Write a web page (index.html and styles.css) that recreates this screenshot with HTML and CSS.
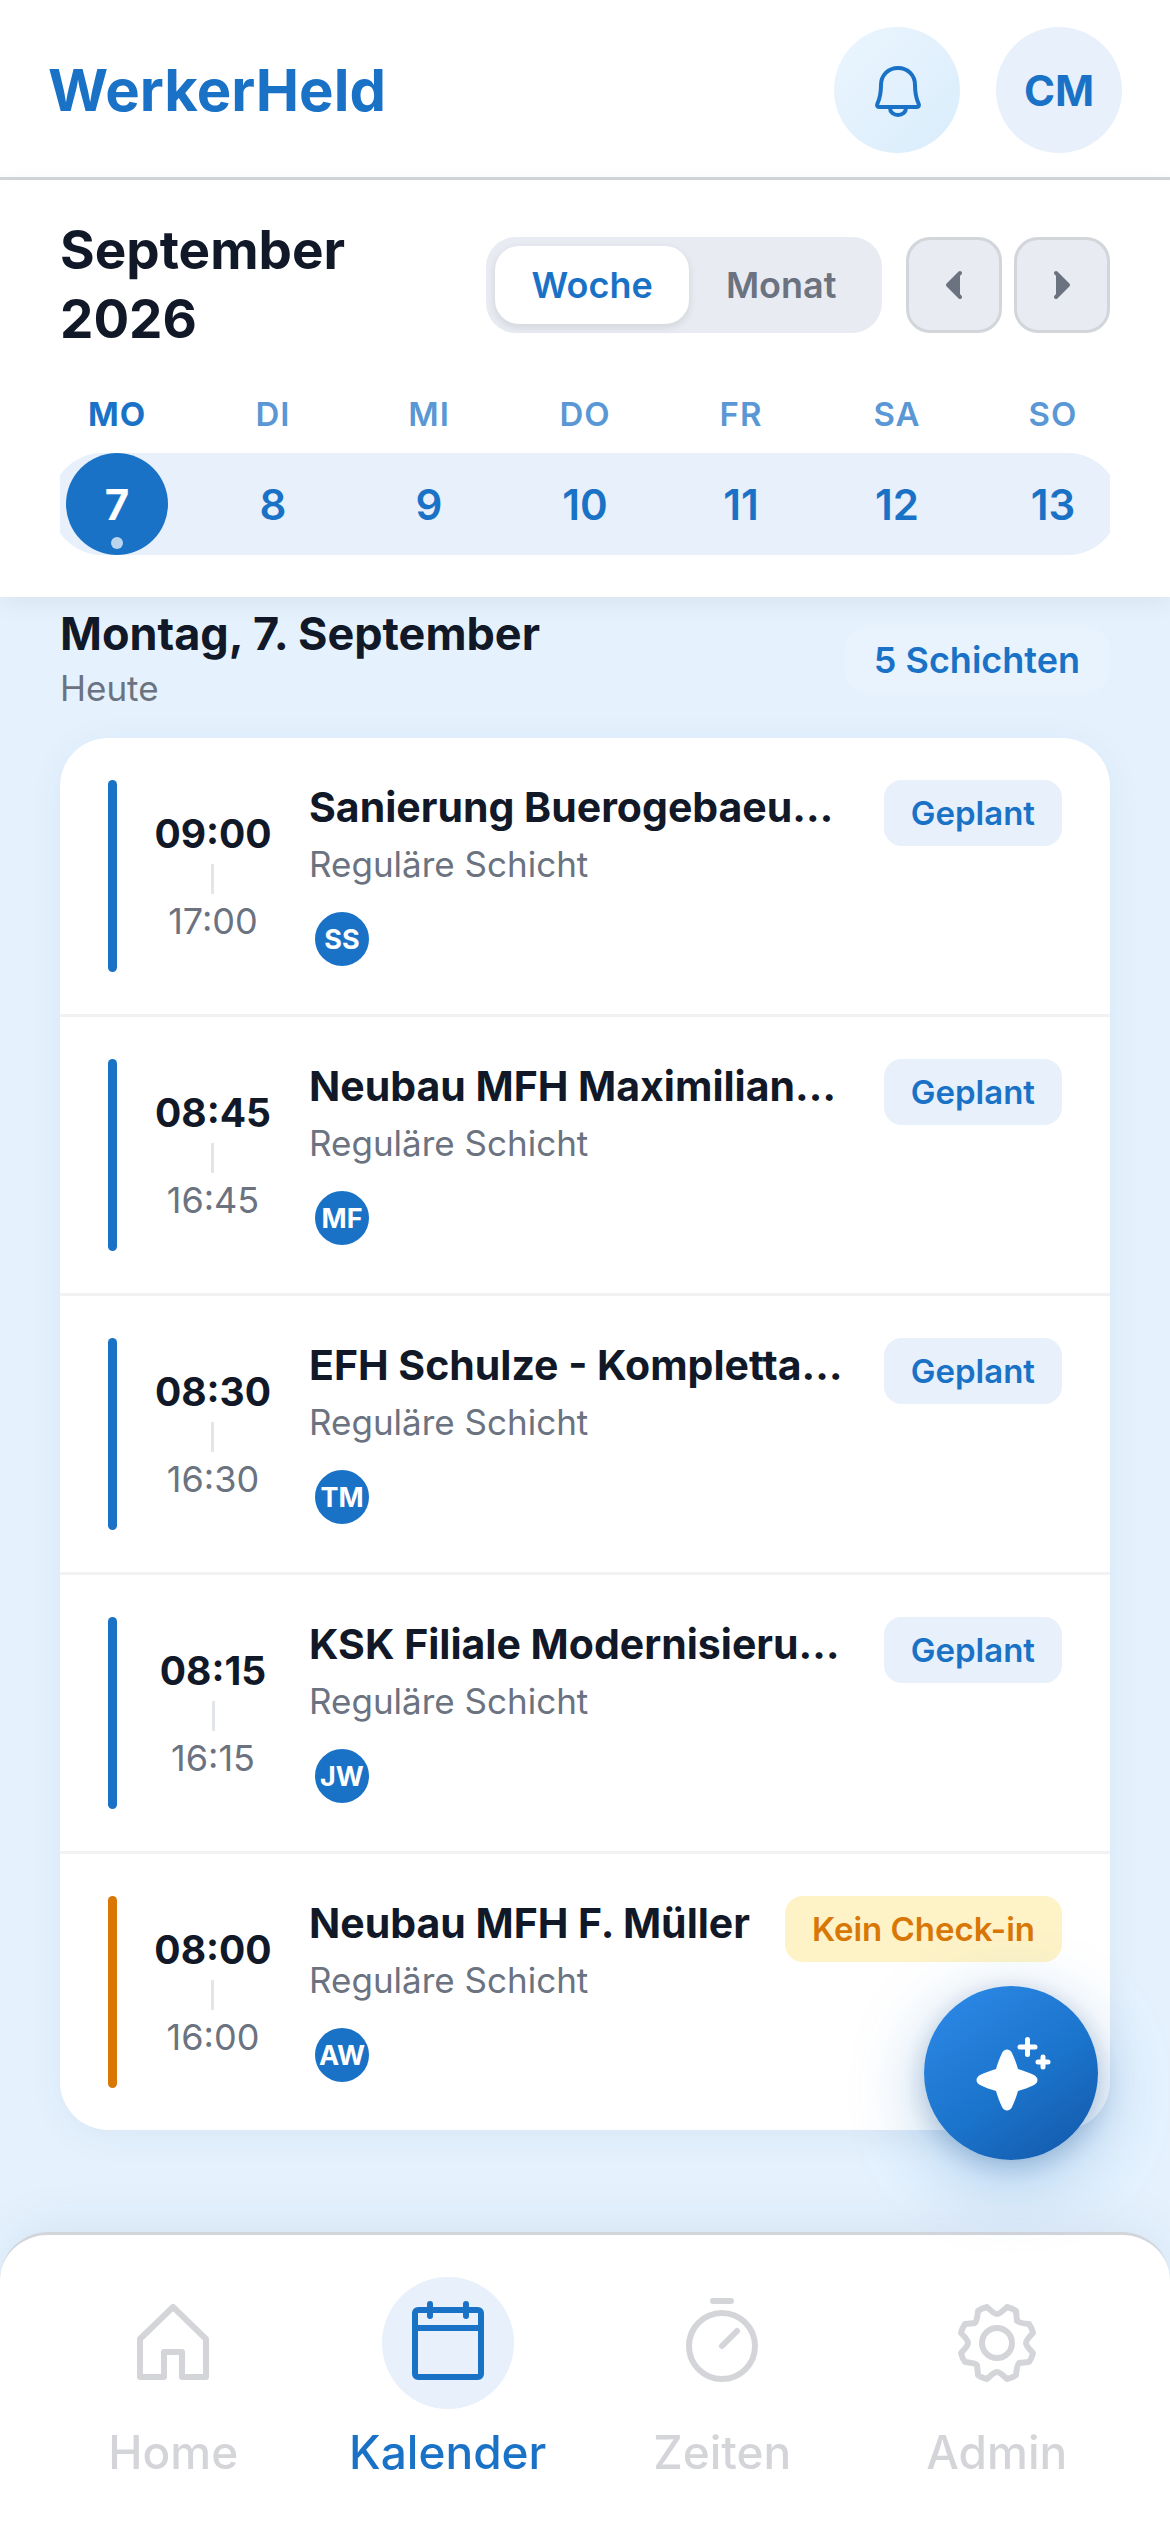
FILE: index.html
```
<!DOCTYPE html>
<html lang="de">

<head>
    <meta charset="UTF-8">
    <meta name="viewport" content="width=device-width, initial-scale=1.0">
    <title>WerkerHeld</title>
    <link rel="stylesheet" href="styles.css">
</head>

<body>
    <header class="topbar">
        <a class="logo" href="#">WerkerHeld</a>
        <div class="topbar-actions">
            <button class="round-btn bell-btn" type="button" aria-label="Benachrichtigungen">
                <svg width="60" height="60" viewBox="0 0 60 60" fill="none" stroke="currentColor" stroke-width="4" stroke-linecap="round" stroke-linejoin="round">
                    <path d="M31 8C21 8 14 15.500 14 25c0 9-1 13-3.500 18.500C9.500 45.500 10.500 47 12 47h38c1.500 0 2.500-1.500 1.500-3.500C49 38 48 34 48 25 48 15.500 41 8 31 8z" />
                    <path d="M23 48c0 4 3.500 7 8 7s8-3 8-7" />
                </svg>
            </button>
            <button class="round-btn" type="button">CM</button>
        </div>
    </header>

    <section class="calendar">
        <div class="calendar-head">
            <h1 class="month">September 2026</h1>
            <div class="calendar-controls">
                <div class="toggle">
                    <button class="toggle-btn active" type="button">Woche</button>
                    <button class="toggle-btn" type="button">Monat</button>
                </div>
                <div class="arrows">
                    <button class="arrow-btn" type="button" aria-label="Vorherige Woche">
                        <svg width="48" height="48" viewBox="0 0 48 48"><path d="M30 12L18 24l12 12" /></svg>
                    </button>
                    <button class="arrow-btn" type="button" aria-label="Nächste Woche">
                        <svg width="48" height="48" viewBox="0 0 48 48"><path d="M18 12l12 12-12 12" /></svg>
                    </button>
                </div>
            </div>
        </div>
        <div class="weekdays">
            <span class="weekday today">MO</span>
            <span class="weekday">DI</span>
            <span class="weekday">MI</span>
            <span class="weekday">DO</span>
            <span class="weekday">FR</span>
            <span class="weekday">SA</span>
            <span class="weekday">SO</span>
        </div>
        <div class="week">
            <div class="days">
                <button class="day selected" type="button">7</button>
                <button class="day" type="button">8</button>
                <button class="day" type="button">9</button>
                <button class="day" type="button">10</button>
                <button class="day" type="button">11</button>
                <button class="day" type="button">12</button>
                <button class="day" type="button">13</button>
            </div>
        </div>
    </section>

    <main class="content">
        <div class="day-head">
            <div>
                <h2 class="day-title">Montag, 7. September</h2>
                <p class="day-sub">Heute</p>
            </div>
            <span class="count">5 Schichten</span>
        </div>

        <ul class="shifts">
            <li class="shift">
                <div class="time">
                    <span class="start">09:00</span>
                    <span class="end">17:00</span>
                </div>
                <div class="info">
                    <h3 class="name">Sanierung Buerogebaeu…</h3>
                    <p class="kind">Reguläre Schicht</p>
                    <span class="avatar">SS</span>
                </div>
                <span class="status">Geplant</span>
            </li>
            <li class="shift">
                <div class="time">
                    <span class="start">08:45</span>
                    <span class="end">16:45</span>
                </div>
                <div class="info">
                    <h3 class="name">Neubau MFH Maximilian…</h3>
                    <p class="kind">Reguläre Schicht</p>
                    <span class="avatar">MF</span>
                </div>
                <span class="status">Geplant</span>
            </li>
            <li class="shift">
                <div class="time">
                    <span class="start">08:30</span>
                    <span class="end">16:30</span>
                </div>
                <div class="info">
                    <h3 class="name">EFH Schulze - Kompletta…</h3>
                    <p class="kind">Reguläre Schicht</p>
                    <span class="avatar">TM</span>
                </div>
                <span class="status">Geplant</span>
            </li>
            <li class="shift">
                <div class="time">
                    <span class="start">08:15</span>
                    <span class="end">16:15</span>
                </div>
                <div class="info">
                    <h3 class="name">KSK Filiale Modernisieru…</h3>
                    <p class="kind">Reguläre Schicht</p>
                    <span class="avatar">JW</span>
                </div>
                <span class="status">Geplant</span>
            </li>
            <li class="shift warning">
                <div class="time">
                    <span class="start">08:00</span>
                    <span class="end">16:00</span>
                </div>
                <div class="info">
                    <h3 class="name">Neubau MFH F. Müller</h3>
                    <p class="kind">Reguläre Schicht</p>
                    <span class="avatar">AW</span>
                </div>
                <span class="status">Kein Check-in</span>
            </li>
        </ul>
    </main>

    <nav class="tabbar">
        <a class="tab" href="#">
            <span class="tab-icon">
                <svg width="84" height="84" viewBox="0 0 84 84">
                    <path d="M42 6l33 32v38H51V51H33v25H9V38z" />
                </svg>
            </span>
            Home
        </a>
        <a class="tab active" href="#">
            <span class="tab-icon">
                <svg width="84" height="84" viewBox="0 0 84 84">
                    <rect x="9" y="9" width="66" height="67" rx="3" />
                    <path d="M9 27h66M24 3v12M60 3v12" />
                </svg>
            </span>
            Kalender
        </a>
        <a class="tab" href="#">
            <span class="tab-icon">
                <svg width="84" height="84" viewBox="0 0 84 84">
                    <circle cx="42" cy="45" r="33" />
                    <path d="M42 45l15-15M33 0h18" />
                </svg>
            </span>
            Zeiten
        </a>
        <a class="tab" href="#">
            <span class="tab-icon">
                <svg width="84" height="84" viewBox="0 0 84 84">
                    <circle cx="42" cy="42" r="15" />
                    <path d="M42 13Q45 13 52 6Q57 7 61 10L62 20Q64 22 74 23Q77 27 78 32Q71 39 71 42Q71 45 78 52Q77 57 74 61L64 62Q62 64 61 74Q57 77 52 78Q45 71 42 71Q39 71 32 78Q27 77 23 74L22 64Q20 62 10 61Q7 57 6 52Q13 45 13 42Q13 39 6 32Q7 27 10 23L20 22Q22 20 23 10Q27 7 32 6Q39 13 42 13z" />
                </svg>
            </span>
            Admin
        </a>
    </nav>

    <button class="fab" type="button" aria-label="Assistent">
        <svg width="84" height="84" viewBox="0 0 84 84">
            <path class="star" d="M38 18.500C40 18.500 42 20 43 22C45.500 27 47.500 33 49 38C54 39.500 60 41.500 65 44C67 45 68.500 47 68.500 49C68.500 51 67 53 65 54C60 56.500 54 58.500 49 60C47.500 65 45.500 71 43 76C42 78 40 79.500 38 79.500C36 79.500 34 78 33 76C30.500 71 28.500 65 27 60C22 58.500 16 56.500 11 54C9 53 7.500 51 7.500 49C7.500 47 9 45 11 44C16 41.500 22 39.500 27 38C28.500 33 30.500 27 33 22C34 20 36 18.500 38 18.500z" />
            <path class="plus" d="M51 16h15M58.500 8.500v15M69 31h10M74 26v10" />
        </svg>
    </button>
</body>

</html>
```
FILE: styles.css
```
* {
    margin: 0;
    padding: 0;
    box-sizing: border-box;
}

:root {
    --blue: #1a72c7;
    --light: #e7f0fb;
    --dark: #111827;
    --gray: #6b7280;
    --border: #d2d5da;
}

body {
    min-height: 100vh;
    padding-bottom: 300px;
    font-family: Inter, "Liberation Sans", sans-serif;
    color: var(--dark);
    background: #e5f2fe;
}

button {
    border: none;
    font-family: inherit;
    cursor: pointer;
}

a {
    text-decoration: none;
}

svg {
    display: block;
    overflow: visible;
}

/* header */
.topbar {
    display: flex;
    align-items: center;
    justify-content: space-between;
    padding: 27px 48px 24px;
    background: #fff;
    border-bottom: 3px solid var(--border);
}

.logo {
    font-size: 58px;
    font-weight: 700;
    color: var(--blue);
}

.topbar-actions {
    display: flex;
    gap: 36px;
}

.round-btn {
    display: flex;
    align-items: center;
    justify-content: center;
    width: 126px;
    height: 126px;
    border-radius: 50%;
    font-size: 42px;
    font-weight: 700;
    color: var(--blue);
    background: var(--light);
}

.bell-btn {
    background: linear-gradient(135deg, #ebf5fe, #d9edfb);
}

/* calendar */
.calendar {
    position: relative;
    padding: 36px 60px 42px;
    background: #fff;
    box-shadow: 0 6px 24px rgba(0, 0, 0, 0.06);
}

.calendar-head {
    display: flex;
    align-items: center;
    justify-content: space-between;
    gap: 24px;
}

.month {
    font-size: 53px;
    line-height: 69px;
    font-weight: 700;
}

.calendar-controls,
.toggle,
.arrows {
    display: flex;
}

.calendar-controls {
    gap: 24px;
}

.toggle {
    width: 396px;
    padding: 9px;
    border-radius: 30px;
    background: #e8ebf1;
}

.toggle-btn {
    flex: auto;
    border-radius: 24px;
    font-size: 36px;
    font-weight: 600;
    color: var(--gray);
    background: none;
}

.toggle-btn.active {
    color: var(--blue);
    background: #fff;
    box-shadow: 0 3px 9px rgba(0, 0, 0, 0.1);
}

.arrows {
    gap: 12px;
}

.arrow-btn {
    display: flex;
    align-items: center;
    justify-content: center;
    width: 96px;
    height: 96px;
    border: 3px solid var(--border);
    border-radius: 24px;
    background: #e8ebf1;
}

.arrow-btn path {
    fill: var(--gray);
    stroke: var(--gray);
    stroke-width: 4;
    stroke-linecap: round;
    stroke-linejoin: round;
}

.weekdays {
    display: flex;
    justify-content: space-between;
    padding: 36px 6px 15px;
}

.weekday {
    width: 102px;
    font-size: 33px;
    line-height: 48px;
    font-weight: 600;
    letter-spacing: 1px;
    text-align: center;
    color: #5a97d5;
}

.weekday.today {
    font-weight: 700;
    color: var(--blue);
}

.week {
    overflow: hidden;
}

/* pill is wider than the row and gets clipped on both sides */
.days {
    display: flex;
    justify-content: space-between;
    margin: 0 -9px;
    padding: 0 15px;
    border-radius: 51px;
    background: var(--light);
}

.day {
    position: relative;
    width: 102px;
    height: 102px;
    border-radius: 50%;
    font-size: 42px;
    font-weight: 600;
    color: var(--blue);
    background: none;
}

.day.selected {
    font-weight: 700;
    color: #fff;
    background: var(--blue);
}

.day.selected::after {
    content: "";
    position: absolute;
    left: 45px;
    bottom: 6px;
    width: 12px;
    height: 12px;
    border-radius: 50%;
    background: rgba(255, 255, 255, 0.7);
}

/* shifts */
.content {
    padding: 9px 60px 60px;
}

.day-head {
    display: flex;
    align-items: center;
    justify-content: space-between;
    margin-bottom: 24px;
}

.day-title {
    font-size: 45px;
    line-height: 56px;
    font-weight: 700;
}

.day-sub {
    font-size: 35px;
    line-height: 52px;
    color: var(--gray);
}

.count {
    padding: 0 30px;
    border-radius: 24px;
    font-size: 36px;
    line-height: 66px;
    font-weight: 600;
    color: var(--blue);
    background: #e8f3fd;
}

.shifts {
    list-style: none;
    border-radius: 48px;
    background: #fff;
    box-shadow: 0 6px 36px rgba(0, 20, 60, 0.06);
}

.shift {
    display: flex;
    align-items: flex-start;
    padding: 42px 48px;
    border-bottom: 3px solid #f1f2f4;
}

.shift:last-child {
    border-bottom: none;
}

.shift::before {
    content: "";
    align-self: stretch;
    width: 9px;
    border-radius: 5px;
    background: var(--blue);
}

.shift.warning::before {
    background: #d97706;
}

.time {
    display: flex;
    flex-direction: column;
    align-items: center;
    align-self: center;
    width: 144px;
    margin: 0 24px;
}

.start {
    font-size: 39px;
    line-height: 48px;
    font-weight: 700;
}

.end {
    font-size: 36px;
    line-height: 42px;
    color: var(--gray);
}

.end::before {
    content: "";
    display: block;
    width: 3px;
    height: 30px;
    margin: 6px auto;
    background: #e2e6ea;
}

.info {
    flex: 1;
    min-width: 0;
}

.name {
    font-size: 41px;
    line-height: 54px;
    font-weight: 700;
    white-space: nowrap;
}

.kind {
    margin: 3px 0 15px;
    font-size: 35px;
    line-height: 54px;
    color: var(--gray);
}

.avatar {
    display: flex;
    align-items: center;
    justify-content: center;
    width: 66px;
    height: 66px;
    border: 6px solid #fff;
    border-radius: 50%;
    font-size: 27px;
    font-weight: 700;
    color: #fff;
    background: var(--blue);
}

.status {
    padding: 0 27px;
    border-radius: 18px;
    font-size: 33px;
    line-height: 66px;
    font-weight: 600;
    white-space: nowrap;
    color: var(--blue);
    background: var(--light);
}

.warning .status {
    color: #d97706;
    background: #fef3c7;
}

/* bottom navigation */
.tabbar {
    position: fixed;
    left: 0;
    right: 0;
    bottom: 0;
    display: flex;
    height: 300px;
    padding: 42px 36px 0;
    border-top: 3px solid var(--border);
    border-radius: 48px 48px 0 0;
    background: #fff;
    box-shadow: 0 -12px 48px rgba(0, 20, 60, 0.06);
}

.tab {
    flex: 1;
    display: flex;
    flex-direction: column;
    align-items: center;
    gap: 15px;
    font-size: 46px;
    line-height: 56px;
    font-weight: 500;
    color: #d3d5d8;
}

.tab.active {
    color: var(--blue);
}

.tab-icon {
    display: flex;
    align-items: center;
    justify-content: center;
    width: 132px;
    height: 132px;
    border-radius: 50%;
}

.active .tab-icon {
    background: var(--light);
}

.tab-icon svg {
    fill: none;
    stroke: currentColor;
    stroke-width: 6;
    stroke-linecap: round;
    stroke-linejoin: round;
}

/* floating assistant button */
.fab {
    position: fixed;
    right: 72px;
    bottom: 372px;
    display: flex;
    align-items: center;
    justify-content: center;
    width: 174px;
    height: 174px;
    border-radius: 50%;
    background: linear-gradient(145deg, #2b87e5 10%, #1b74cb 55%, #1256a8);
    box-shadow: 0 18px 72px rgba(26, 114, 199, 0.35), 0 6px 24px rgba(0, 40, 80, 0.2);
}

.star {
    fill: #fff;
}

.plus {
    fill: none;
    stroke: #fff;
    stroke-width: 5;
    stroke-linecap: round;
}
```
